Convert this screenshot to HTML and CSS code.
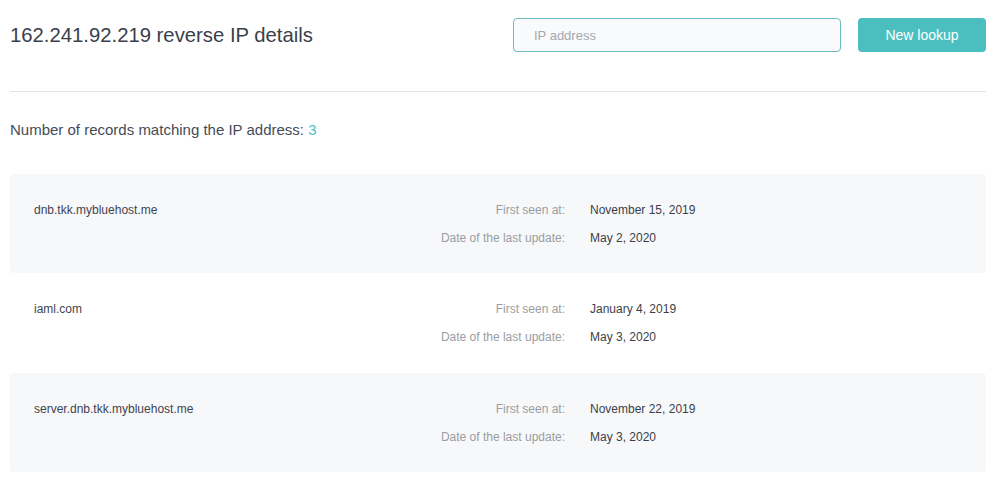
FILE: index.html
```html
<!DOCTYPE html>
<html>
<head>
<meta charset="UTF-8">
<title>162.241.92.219 reverse IP details</title>
<link rel="stylesheet" href="styles.css">
</head>
<body>
<div class="page">
	<div class="header">
		<h1 class="title">162.241.92.219 reverse IP details</h1>
		<form class="lookup">
			<input type="text" class="ip-input" placeholder="IP address" />
			<button type="button" class="btn">New lookup</button>
		</form>
	</div>

	<p class="summary">Number of records matching the IP address: <span class="count">3</span></p>

	<div class="records">
		<div class="record">
			<div class="host">dnb.tkk.mybluehost.me</div>
			<div class="label">First seen at:</div>
			<div class="value">November 15, 2019</div>
			<div class="label">Date of the last update:</div>
			<div class="value">May 2, 2020</div>
		</div>
		<div class="record">
			<div class="host">iaml.com</div>
			<div class="label">First seen at:</div>
			<div class="value">January 4, 2019</div>
			<div class="label">Date of the last update:</div>
			<div class="value">May 3, 2020</div>
		</div>
		<div class="record">
			<div class="host">server.dnb.tkk.mybluehost.me</div>
			<div class="label">First seen at:</div>
			<div class="value">November 22, 2019</div>
			<div class="label">Date of the last update:</div>
			<div class="value">May 3, 2020</div>
		</div>
	</div>
</div>
</body>
</html>
```

FILE: styles.css
```css
body {margin: 0;
		background: #fff;
		font-family: "Liberation Sans", Arial, sans-serif;
		color: #3d4350;}

.page {padding: 18px 14px 0 10px;}

.header {display: flex;
		align-items: center;
		justify-content: space-between;
		padding-bottom: 39px;
		border-bottom: 1px solid #e3e5e8;}

.title {margin: 0;
		font-size: 20.3px;
		font-weight: normal;
		color: #3a3f4b;}

.lookup {display: flex;
		gap: 17px;}

.ip-input {width: 328px;
		height: 34px;
		box-sizing: border-box;
		padding: 0 20px;
		border: 1px solid #6dbcc0;
		border-radius: 4px;
		background: #f8fafc;
		font-family: inherit;
		font-size: 13px;
		color: #333;
		outline: none;}
.ip-input::placeholder {color: #a5a8ad;}

.btn {width: 128px;
		height: 34px;
		border: 0;
		border-radius: 4px;
		background: #4bbfbf;
		color: #fff;
		font-family: inherit;
		font-size: 14px;}

.summary {margin: 28px 0 34px;
		font-size: 15px;
		line-height: 20px;
		color: #464b56;}
.count {color: #4bbfbf;}

.record {display: grid;
		grid-template-columns: 326px 180px 1fr;
		column-gap: 25px;
		padding: 22px 24px 21px;
		border-radius: 4px;
		font-size: 12px;
		line-height: 28px;}
.record:nth-child(odd) {background: #f7f8fa;}
.record:last-child {margin-top: 1px;}

.host {grid-row: span 2;
		color: #3f4450;}

.label {text-align: right;
		color: #9a9da3;}

.value {color: #3a3f4a;}
```
